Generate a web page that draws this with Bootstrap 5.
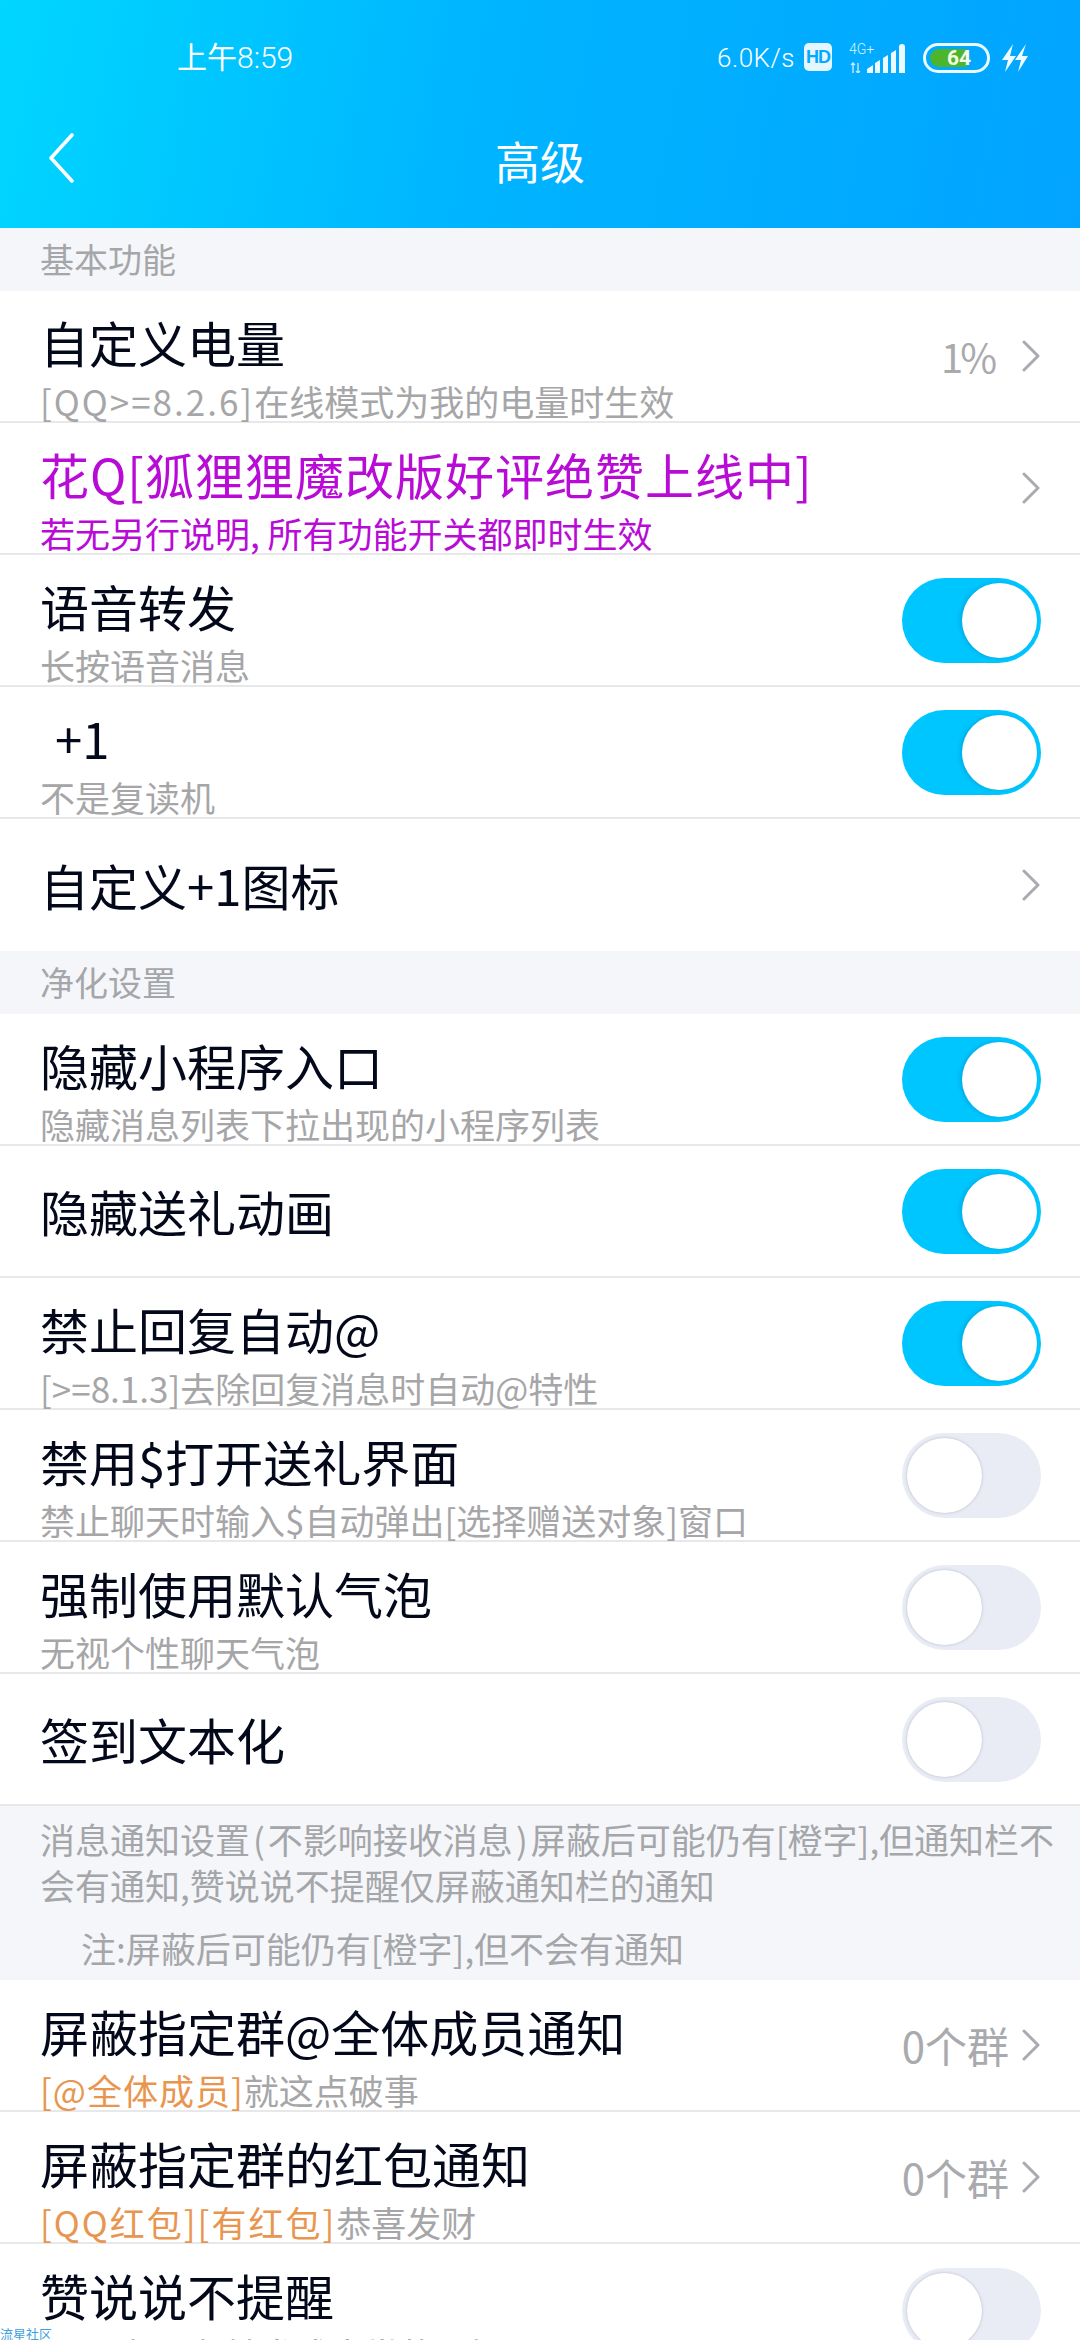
<!DOCTYPE html>
<html lang="zh-CN">
<head>
  <meta charset="UTF-8" />
  <meta name="viewport" content="width=device-width, initial-scale=1.0"/>
  <title>高级</title>
  <link href="https://cdn.jsdelivr.net/npm/bootstrap@5.3.3/dist/css/bootstrap.min.css" rel="stylesheet"/>
  <style>
    html, body {
      height: 2340px;
      overflow: hidden;
    }
    body {
      background: #fff;
      font-family: "Noto Sans CJK SC", "Noto Sans", sans-serif;
      position: relative;
    }
    .app-head {
      height: 228px;
      background: linear-gradient(100deg, #00d6ff 0%, #00b4ff 45%, #02a4ff 100%);
      color: #fff;
    }
    .stat-bar {
      height: 106px;
      padding: 43px 52px 0 177px;
      font-family: Roboto, sans-serif;
      font-weight: 300;
    }
    .stat-time { font-size: 30px; line-height: 30px; }
    .stat-speed { font-size: 26px; line-height: 30px; letter-spacing: .5px; margin-right: 9px; }
    .hd-tag {
      width: 28px;
      height: 28px;
      border-radius: 5px;
      background: #e4f7ff;
      color: #05a8ff;
      font-size: 18px;
      font-weight: 700;
      line-height: 28px;
      text-align: center;
      letter-spacing: -1px;
      font-family: "Liberation Sans", sans-serif;
      margin-right: 17px;
    }
    .net-box { width: 58px; height: 34px; margin: -4px 16px 0 0; }
    .batt-box { width: 67px; height: 30px; margin-right: 11px; }
    .title-bar { height: 110px; }
    .back-btn { left: 48px; top: 27px; }
    .page-name { font-size: 45px; line-height: 110px; margin: 0; font-weight: 400; text-align: center; }

    .sec-head {
      height: 63px;
      padding-left: 40px;
      background: #f5f6fa;
      color: #a5a6a9;
      font-size: 34px;
      line-height: 62px;
    }
    .set-row {
      height: 132px;
      padding: 0 39px 0 40px;
      background: #fff;
      border-bottom: 2px solid #e8e8ea;
    }
    .set-row.last { border-bottom: 0; }
    .row-name { font-size: 49px; line-height: 66px; color: #03081a; white-space: nowrap; }
    .row-sub { font-size: 35px; line-height: 40px; margin-top: 6px; color: #a6a6a8; white-space: nowrap; }
    .row-texts { padding-top: 18px; }
    .row-texts.one { padding-top: 0; }
    .hua-name, .hua-sub { color: #b80cd6; }
    .hua-name { letter-spacing: 1px; }
    .orange { color: #e8964f; }
    .wide-chars { letter-spacing: 2px; }
    .wide-tag { letter-spacing: 1px; }
    .plus-one { padding-left: 15px; }
    .row-val { font-size: 42px; color: #a9aaad; line-height: 50px; }
    .row-val.pct { font-size: 40px; letter-spacing: -3px; margin-right: 15px; }
    .row-arrow { width: 20px; height: 32px; margin-left: 12px; flex: none; }
    .sw-track {
      width: 139px;
      height: 85px;
      border-radius: 43px;
      background: #e9ecf5;
      padding: 5px;
      flex: none;
    }
    .sw-track.on { background: #00c6ff; justify-content: flex-end; padding-right: 4px; }
    .sw-knob {
      width: 75px;
      height: 75px;
      border-radius: 50%;
      background: #fff;
      box-shadow: 0 0 3px rgba(120, 125, 140, .45);
    }
    .sw-track.on .sw-knob { box-shadow: -2px 0 4px rgba(0, 90, 140, .25); }
    .note-box {
      height: 174px;
      padding: 10px 20px 0 40px;
      background: #f5f6fa;
      color: #a5a6a9;
      font-size: 35px;
      line-height: 46px;
    }
    .paren { padding: 0 3px; }
    .note-extra { padding-left: 41px; margin-top: 17px; }
    .wm-tag {
      position: absolute;
      left: 0;
      bottom: 0;
      font-size: 13px;
      line-height: 13px;
      color: #3f9fe0;
      z-index: 2;
    }
  </style>
</head>
<body>
  <div class="app-head">
    <div class="stat-bar d-flex justify-content-between align-items-start">
      <div class="stat-time">上午8:59</div>
      <div class="d-flex align-items-start">
        <div class="stat-speed">6.0K/s</div>
        <div class="hd-tag">HD</div>
        <svg class="net-box" viewBox="0 -4 58 34">
          <text x="0" y="11" font-family="Roboto" font-size="14" fill="#d8f4ff">4G+</text>
          <path d="M4 20v10M2 22l2-2 2 2M9 30V20M7 28l2 2 2-2" stroke="#bfeaff" stroke-width="1.4" fill="none"/>
          <path d="M18 30v-4l6-4v8zM26 30V20l5-3v13zM34 30V15l5-3v18zM42 30V10l5-3v23zM50 30V4a3 3 0 0 1 6 0v26z" fill="#eafaff"/>
        </svg>
        <svg class="batt-box" viewBox="0 0 67 30">
          <rect x="1.5" y="1.5" width="64" height="27" rx="13.5" fill="none" stroke="#eafaff" stroke-width="3"/>
          <path d="M16 6h28v18H16a9 9 0 0 1 0-18z" fill="#4cb52c"/>
          <text x="36" y="22" text-anchor="middle" font-family="Roboto" font-weight="700" font-size="21" fill="#f3fbe6">64</text>
        </svg>
        <svg width="27" height="30" viewBox="0 0 27 30">
          <path d="M12 1 1 17h6L4 29l11-16H9zM25 1 14 17h6l-3 12 10-16h-6z" fill="#f0fbff"/>
        </svg>
      </div>
    </div>
    <div class="title-bar position-relative">
      <svg class="back-btn position-absolute" width="26" height="50" viewBox="0 0 26 50">
        <path d="M24 2 3 25l21 23" fill="none" stroke="#fff" stroke-width="3.6" stroke-linecap="round" stroke-linejoin="round"/>
      </svg>
      <h1 class="page-name">高级</h1>
    </div>
  </div>

  <div id="settings"></div>

  <div class="wm-tag">流星社区</div>

  <script>
    const arrow = `<svg class="row-arrow" viewBox="0 0 20 32"><path d="M3 2l14 14L3 30" fill="none" stroke="#a9abb0" stroke-width="3" stroke-linecap="round" stroke-linejoin="round"/></svg>`;
    const orange = (s, cls) => `<span class="orange ${cls}">${s}</span>`;

    const rows = [
      { sec: "基本功能" },
      { name: "自定义电量", sub: `<span class="wide-chars">[QQ>=8.2.6]</span>在线模式为我的电量时生效`, val: "1%", pct: true },
      { name: "花Q[狐狸狸魔改版好评绝赞上线中]", sub: "若无另行说明, 所有功能开关都即时生效", val: "", hua: true },
      { name: "语音转发", sub: "长按语音消息", sw: 1 },
      { name: "+1", sub: "不是复读机", sw: 1, plus: true },
      { name: "自定义+1图标", val: "", last: true },
      { sec: "净化设置" },
      { name: "隐藏小程序入口", sub: "隐藏消息列表下拉出现的小程序列表", sw: 1 },
      { name: "隐藏送礼动画", sw: 1 },
      { name: "禁止回复自动@", sub: "[>=8.1.3]去除回复消息时自动@特性", sw: 1 },
      { name: "禁用$打开送礼界面", sub: "禁止聊天时输入$自动弹出[选择赠送对象]窗口", sw: 0 },
      { name: "强制使用默认气泡", sub: "无视个性聊天气泡", sw: 0 },
      { name: "签到文本化", sw: 0 },
      { note: true },
      { name: "屏蔽指定群@全体成员通知", sub: orange("[@全体成员]", "wide-tag") + "就这点破事", val: "0个群" },
      { name: "屏蔽指定群的红包通知", sub: orange("[QQ红包][有红包]", "wide-chars") + "恭喜发财", val: "0个群" },
      { name: "赞说说不提醒", sub: "不影响评论,转发或击掌的通知", sw: 0, last: true },
    ];

    const html = rows.map((r) => {
      if (r.sec) return `<div class="sec-head">${r.sec}</div>`;
      if (r.note) {
        return `<div class="note-box">
          <div>消息通知设置<span class="paren">(</span>不影响接收消息<span class="paren">)</span>屏蔽后可能仍有[橙字],但通知栏不会有通知,赞说说不提醒仅屏蔽通知栏的通知</div>
          <div class="note-extra">注:屏蔽后可能仍有[橙字],但不会有通知</div>
        </div>`;
      }
      let right = "";
      if (r.sw !== undefined) {
        right = `<div class="sw-track d-flex align-items-center ${r.sw ? "on" : ""}"><span class="sw-knob"></span></div>`;
      } else {
        right = `<div class="d-flex align-items-center">${r.val ? `<span class="row-val ${r.pct ? "pct" : ""}">${r.val}</span>` : ""}${arrow}</div>`;
      }
      return `<div class="set-row d-flex justify-content-between ${r.sub ? "align-items-start" : "align-items-center"} ${r.last ? "last" : ""}">
        <div class="row-texts ${r.sub ? "" : "one"}">
          <div class="row-name ${r.hua ? "hua-name" : ""} ${r.plus ? "plus-one" : ""}">${r.name}</div>
          ${r.sub ? `<div class="row-sub ${r.hua ? "hua-sub" : ""}">${r.sub}</div>` : ""}
        </div>
        <div class="align-self-center">${right}</div>
      </div>`;
    }).join("");

    document.getElementById("settings").innerHTML = html;
  </script>
</body>
</html>
